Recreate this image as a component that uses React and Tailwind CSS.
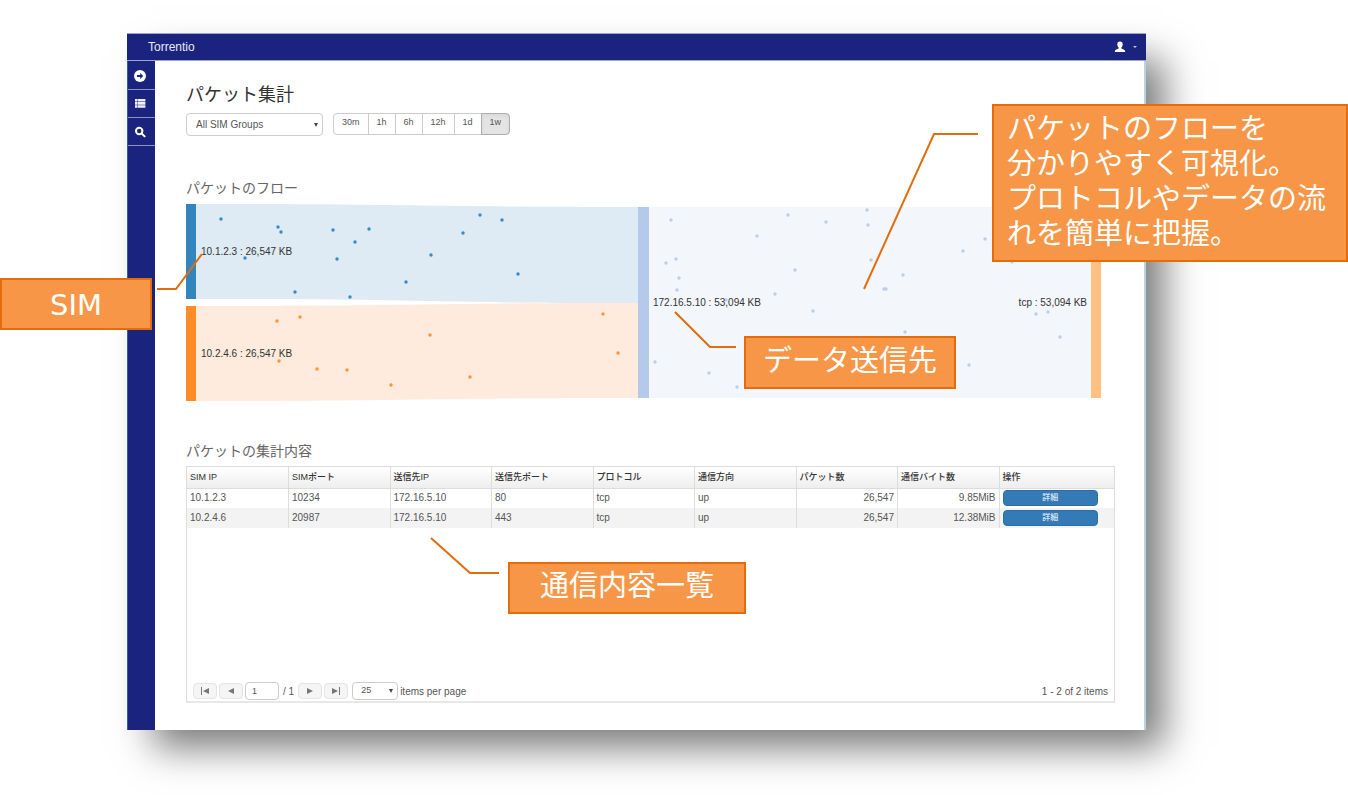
import React, { useState } from "react";

const ranges = ["30m", "1h", "6h", "12h", "1d", "1w"];

const rows = [
  { simIp: "10.1.2.3", simPort: "10234", dstIp: "172.16.5.10", dstPort: "80", protocol: "tcp", direction: "up", packets: "26,547", bytes: "9.85MiB" },
  { simIp: "10.2.4.6", simPort: "20987", dstIp: "172.16.5.10", dstPort: "443", protocol: "tcp", direction: "up", packets: "26,547", bytes: "12.38MiB" },
];

const columns = ["SIM IP", "SIMポート", "送信先IP", "送信先ポート", "プロトコル", "通信方向", "パケット数", "通信バイト数", "操作"];

// packets moving along each link, [x, y]
const bluePackets = [
  [35, 15], [92, 23], [95, 28], [147, 26], [183, 25], [169, 38], [294, 11], [316, 16],
  [277, 29], [245, 51], [151, 55], [59, 54], [332, 70], [220, 78], [109, 88], [164, 93],
];
const orangePackets = [
  [91, 117], [114, 113], [417, 110], [244, 131], [432, 149], [93, 157], [131, 165],
  [161, 166], [284, 173], [205, 181],
];
const tcpPackets = [
  [485, 16], [602, 11], [640, 18], [681, 6], [682, 21], [571, 32], [799, 35], [777, 47],
  [490, 55], [480, 59], [685, 56], [609, 66], [493, 74], [717, 71], [491, 86], [698, 85],
  [700, 85], [589, 90], [627, 107], [719, 128], [850, 110], [862, 108], [874, 133],
  [783, 161], [469, 158], [523, 169], [551, 183], [826, 58], [540, 96],
];

const Packets = ({ points, color }) => (
  <g fill={color}>
    {points.map(([x, y], index) => (
      <circle key={index} cx={x} cy={y} r="1.7" />
    ))}
  </g>
);

const FlowChart = () => (
  <svg viewBox="0 0 915 198" className="block w-full" role="img" aria-label="パケットのフロー">
    <path d="M10 0C230 0 230 3 452 3V99C230 99 230 95 10 95Z" fill="#deeaf4" />
    <path d="M10 102C230 102 230 99 452 99V194C230 194 230 197 10 197Z" fill="#feebdd" />
    <rect x="462" y="3" width="443" height="191" fill="#f3f6fb" />
    <Packets points={bluePackets} color="#3a8ac2" />
    <Packets points={orangePackets} color="#ff9436" />
    <Packets points={tcpPackets} color="#bccde9" />
    <rect x="0" y="0" width="10" height="95" fill="#3484bd" />
    <rect x="0" y="102" width="10" height="95" fill="#ff8c26" />
    <rect x="452" y="3" width="11" height="191" fill="#b5c9ea" />
    <rect x="905" y="3" width="10" height="191" fill="#ffc182" />
    <g className="text-[10px]" fill="#333">
      <text x="15" y="51">10.1.2.3 : 26,547 KB</text>
      <text x="15" y="153">10.2.4.6 : 26,547 KB</text>
      <text x="467" y="102">172.16.5.10 : 53,094 KB</text>
      <text x="901" y="102" textAnchor="end">tcp : 53,094 KB</text>
    </g>
  </svg>
);

const Header = () => (
  <header className="flex h-7 items-center justify-between border-y border-[#9fa3cf] bg-[#1a237e] pl-[21px] pr-2">
    <a href="#" className="text-[12px] text-[#e8e8f4]">Torrentio</a>
    <button type="button" aria-label="User menu" className="flex items-center gap-1.5">
      <svg viewBox="0 0 12 12" className="size-3 fill-white">
        <path d="M6 0.5C4 0.5 3.2 1.8 3.3 3.5C3.4 5 4 6 4.6 6.6V7.6C3.4 8.4 0.8 8.7 0.8 10.5V11H11.2V10.5C11.2 8.7 8.6 8.4 7.4 7.6V6.6C8 6 8.6 5 8.7 3.5C8.8 1.8 8 0.5 6 0.5Z" />
      </svg>
      <svg viewBox="0 0 6 4" className="h-1 w-1.5 fill-[#c5c8e6]">
        <path d="M1 1H5L3 3Z" />
      </svg>
    </button>
  </header>
);

const Sidebar = () => {
  const item = "flex h-7 items-center justify-center border-b border-[#8d92c4] pr-1";
  return (
    <nav className="w-7 shrink-0 border-l border-[#2f5fa8] bg-[#1a237e] pt-px">
      <a href="#" aria-label="Open" className={item}>
        <svg viewBox="0 0 12 12" className="size-3">
          <circle cx="6" cy="6" r="6" fill="#fff" />
          <path d="M6.2 3L9.2 6L6.2 9V7H3V5H6.2Z" fill="#1a237e" />
        </svg>
      </a>
      <a href="#" aria-label="List" className={item}>
        <svg viewBox="0 0 12 12" className="size-3 fill-[#eef]">
          <path d="M1 1H3.6V3.6H1ZM4 1H11.4V3.6H4ZM1 4.1H3.6V6.7H1ZM4 4.1H11.4V6.7H4ZM1 7.2H3.6V9.8H1ZM4 7.2H11.4V9.8H4Z" />
        </svg>
      </a>
      <a href="#" aria-label="Search" className={item}>
        <svg viewBox="0 0 12 12" className="size-3" fill="none" stroke="#fff" strokeWidth="2">
          <circle cx="5.2" cy="5" r="3.2" />
          <path d="M7.6 7.4L10.6 10.4" strokeLinecap="round" />
        </svg>
      </a>
    </nav>
  );
};

const Caret = () => (
  <svg viewBox="0 0 6 6" className="pointer-events-none absolute right-1 top-1/2 size-1.5 -translate-y-1/2 fill-[#444]">
    <path d="M1 1H5L3 5Z" />
  </svg>
);

const PagerButton = ({ label, d }) => (
  <button type="button" aria-label={label} className="flex h-4 w-6 items-center justify-center rounded-sm border border-[#e4e4e4] bg-[#f5f5f5]">
    <svg viewBox="0 0 10 8" className="h-2 w-2.5 fill-[#777]">
      <path d={d} />
    </svg>
  </button>
);

const Pager = () => (
  <div className="flex items-center justify-between px-1.5 pb-px text-[10px] text-[#555]">
    <div className="flex items-center gap-0.5">
      <PagerButton label="First page" d="M1 0H2V8H1ZM9 1V7L3 4Z" />
      <PagerButton label="Previous page" d="M8 1V7L2 4Z" />
      <input aria-label="Page" defaultValue="1" className="h-[18px] w-[34px] rounded-sm border border-[#ccc] bg-white px-1.5 text-[9px]" />
      <span className="px-0.5">/ 1</span>
      <PagerButton label="Next page" d="M2 1V7L8 4Z" />
      <PagerButton label="Last page" d="M8 0H9V8H8ZM1 1V7L7 4Z" />
      <label className="flex items-center gap-0.5 pl-0.5">
        <span className="relative">
          <select className="block h-[18px] w-[46px] appearance-none rounded-sm border border-[#ccc] bg-white px-2 text-[9px]">
            <option>25</option>
            <option>50</option>
          </select>
          <Caret />
        </span>
        items per page
      </label>
    </div>
    <span>1 - 2 of 2 items</span>
  </div>
);

const PacketTable = () => {
  const cell = "h-5 border-r border-[#ddd] px-[3px] py-0";
  return (
    <div className="mt-[5px] flex min-h-[237px] flex-col justify-between border border-[#ddd] border-b-2 border-b-[#e8e8e8]">
      <table className="w-full table-fixed text-left text-[10px] leading-3 text-[#555]">
        <colgroup>
          {columns.map((name, index) => (
            <col key={name} className={index === 8 ? "w-[12.4%]" : "w-[10.95%]"} />
          ))}
        </colgroup>
        <thead>
          <tr className="bg-linear-to-b from-white to-[#eee]">
            {columns.map((name) => (
              <th key={name} className="h-[21px] whitespace-nowrap border-b border-r border-[#ddd] px-[3px] py-0 text-[9px] font-medium text-[#333] last:border-r-0">
                {name}
              </th>
            ))}
          </tr>
        </thead>
        <tbody>
          {rows.map((r) => (
            <tr key={r.simIp} className="even:bg-[#f3f3f3]">
              <td className={cell}>{r.simIp}</td>
              <td className={cell}>{r.simPort}</td>
              <td className={cell}>{r.dstIp}</td>
              <td className={cell}>{r.dstPort}</td>
              <td className={cell}>{r.protocol}</td>
              <td className={cell}>{r.direction}</td>
              <td className={`${cell} text-right`}>{r.packets}</td>
              <td className={`${cell} text-right`}>{r.bytes}</td>
              <td className="h-5 py-0 pl-[3px] pr-4">
                <button type="button" className="block h-4 w-full rounded-sm border border-[#2e6da4] bg-[#337ab7] text-[8px] leading-3 text-white">
                  詳細
                </button>
              </td>
            </tr>
          ))}
        </tbody>
      </table>
      <Pager />
    </div>
  );
};

const Callout = ({ className, children }) => (
  <div
    className={`absolute border-2 border-[#e46c0a] bg-[#f79646] font-['DejaVu_Sans','Noto_Sans_CJK_JP',sans-serif] text-[29px] leading-[35px] text-white ${className}`}
  >
    {children}
  </div>
);

// explanatory notes drawn over the window
const Annotations = () => (
  <>
    <svg className="pointer-events-none absolute left-0 top-0 h-full w-full" fill="none" stroke="#e46c0a" strokeWidth="2">
      <polyline points="157,289 176,289 202,254" />
      <polyline points="675,312 710,347 736,347" />
      <polyline points="864,289 934,134 978,134" />
      <polyline points="431,538 470,573 499,573" />
    </svg>
    <Callout className="left-[992px] top-[104px] w-[356px] px-[13px] pb-2 pt-1.5">
      パケットのフローを
      <br />
      分かりやすく可視化。
      <br />
      プロトコルやデータの流れを簡単に把握。
    </Callout>
    <Callout className="left-0 top-[278px] w-[152px] pb-[5px] pt-2 text-center">SIM</Callout>
    <Callout className="left-[744px] top-[336px] w-[212px] pb-2 pt-1.5 text-center">データ送信先</Callout>
    <Callout className="left-[508px] top-[562px] w-[238px] pb-2 pt-[5px] text-center">通信内容一覧</Callout>
  </>
);

const App = () => {
  const [range, setRange] = useState("1w");

  return (
    <div className="relative min-h-screen overflow-hidden bg-white pb-[65px] pl-[127px] pr-[202px] pt-[33px] font-['Liberation_Sans','Noto_Sans_CJK_JP',sans-serif]">
      <div className="shadow-[22px_22px_36px_-4px_rgba(0,0,0,0.52)]">
        <Header />
        <div className="flex border-r-2 border-[#b5d5e5] bg-white">
          <Sidebar />
          <main className="min-w-0 flex-1 pb-[27px] pl-[31px] pr-[29px] pt-[22px]">
            <h1 className="text-[18px] leading-6 text-[#333]">パケット集計</h1>
            <div className="mt-1.5 flex gap-2.5 text-[10px] text-[#555]">
              <div className="relative">
                <select aria-label="SIM group" className="block h-[23px] w-[137px] appearance-none rounded-sm border border-[#ccc] bg-white px-[9px]">
                  <option>All SIM Groups</option>
                </select>
                <Caret />
              </div>
              <div className="flex h-[22px] text-[9px]" role="group" aria-label="Range">
                {ranges.map((r) => (
                  <button
                    key={r}
                    type="button"
                    aria-pressed={range === r}
                    onClick={() => setRange(r)}
                    className={`-ml-px border px-2 pb-0.5 first:ml-0 first:rounded-l-sm last:rounded-r-sm ${
                      range === r ? "border-[#adadad] bg-[#e4e4e4] shadow-inner" : "border-[#ccc] bg-white"
                    }`}
                  >
                    {r}
                  </button>
                ))}
              </div>
            </div>

            <h2 className="mt-[42px] text-[14px] leading-5 text-[#666]">パケットのフロー</h2>
            <div className="mr-3.5 mt-1.5">
              <FlowChart />
            </div>

            <h2 className="mt-[39px] text-[14px] leading-5 text-[#666]">パケットの集計内容</h2>
            <PacketTable />
          </main>
        </div>
      </div>
      <Annotations />
    </div>
  );
};

export default App;
